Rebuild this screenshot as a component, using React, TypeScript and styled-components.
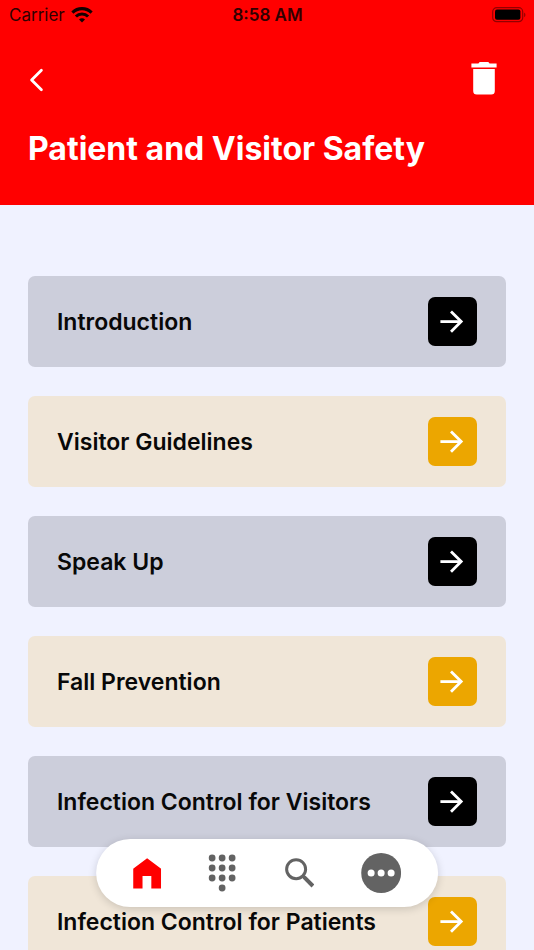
import React from "react";
import styled, { createGlobalStyle } from "styled-components";

const GlobalStyle = createGlobalStyle`
  *, *::before, *::after { box-sizing: border-box; }
  body {
    margin: 0;
    background: #f0f2ff;
    color: #080808;
    font-family: Inter, "Liberation Sans", sans-serif;
  }
  button { font: inherit; border: 0; padding: 0; background: none; cursor: pointer; }
  svg { display: block; }
`;

const Screen = styled.div`
  position: relative;
  display: flex;
  flex-direction: column;
  height: 100vh;
  overflow: hidden;
`;

const Header = styled.header`
  flex: none;
  background: #ff0000;
  padding-bottom: 36px;
`;

const StatusBar = styled.div`
  display: grid;
  grid-template-columns: 1fr auto 1fr;
  align-items: center;
  height: 30px;
  padding: 0 8px 0 9px;
  font-size: 17px;
  line-height: 20px;
  color: #300000;
`;

const Carrier = styled.div`
  display: flex;
  align-items: center;
  gap: 6px;
`;

const Clock = styled.time`
  font-weight: 600;
`;

const BatterySlot = styled.div`
  justify-self: end;
`;

const Toolbar = styled.div`
  display: flex;
  justify-content: space-between;
  align-items: center;
  margin-top: 24px;
  padding: 0 32px 0 24px;
`;

const IconButton = styled.button`
  display: grid;
  place-items: center;
  height: 48px;
`;

const BackButton = styled(IconButton)`
  width: 24px;
`;

const DeleteButton = styled(IconButton)`
  width: 36px;
`;

const Title = styled.h1`
  margin: 27px 28px 0;
  font-size: 32px;
  line-height: 40px;
  font-weight: 700;
  color: #ffffff;
`;

const Content = styled.main`
  flex: 1;
  min-height: 0;
  overflow-y: auto;
  scrollbar-width: none;
  padding: 71px 28px 120px;
`;

const TopicList = styled.ul`
  display: flex;
  flex-direction: column;
  gap: 29px;
  margin: 0;
  padding: 0;
  list-style: none;
`;

type Tone = "dark" | "amber";

const TopicCard = styled.button<{ $tone: Tone }>`
  display: flex;
  align-items: center;
  justify-content: space-between;
  width: 100%;
  height: 91px;
  padding: 0 29px;
  border-radius: 7px;
  background: ${({ $tone }) => ($tone === "dark" ? "#cccedb" : "#f0e6d8")};
  color: #080808;
  text-align: left;
`;

const TopicName = styled.span`
  font-size: 23px;
  line-height: 28px;
  font-weight: 600;
`;

const ArrowTile = styled.span<{ $tone: Tone }>`
  flex: none;
  display: grid;
  place-items: center;
  width: 49px;
  height: 49px;
  border-radius: 7px;
  background: ${({ $tone }) => ($tone === "dark" ? "#000000" : "#eca600")};
`;

const TabBar = styled.nav`
  position: absolute;
  bottom: 43px;
  left: 50%;
  transform: translateX(-50%);
  display: flex;
  align-items: center;
  justify-content: space-between;
  width: 64%;
  height: 68px;
  padding: 0 37px;
  border-radius: 34px;
  background: #ffffff;
  box-shadow: 0 2px 8px rgba(0, 0, 0, 0.16);
`;

const TabButton = styled.button<{ $active?: boolean }>`
  display: grid;
  place-items: center;
  height: 48px;
  color: ${({ $active }) => ($active ? "#ff0000" : "#636363")};
`;

const WifiIcon = () => (
  <svg width="22" height="16" viewBox="0 0 22 16" fill="none" stroke="#140000" strokeWidth="3.1" aria-hidden="true">
    <path d="M1.4 5.6a13.6 13.6 0 0 1 19.2 0" />
    <path d="M4.9 9.5a8.6 8.6 0 0 1 12.2 0" />
    <path d="M11 15.5l-3-3a4.2 4.2 0 0 1 6 0z" fill="#140000" stroke="none" />
  </svg>
);

const BatteryIcon = () => (
  <svg width="34" height="16" viewBox="0 0 34 16" role="img" aria-label="Battery full">
    <rect x="0.7" y="0.7" width="30" height="14" rx="4" fill="none" stroke="#930000" strokeWidth="1.2" />
    <rect x="3" y="2.6" width="25.4" height="10.2" rx="2" fill="#000000" />
    <path d="M32.1 5.4c1.8.8 1.8 4 0 4.8z" fill="#930000" />
  </svg>
);

const BackIcon = () => (
  <svg width="16" height="28" viewBox="0 0 16 28" fill="none" stroke="#ffffff" strokeWidth="2.8" strokeLinecap="round" strokeLinejoin="round" aria-hidden="true">
    <path d="M13.4 6.2 3.6 16l9.8 9.8" />
  </svg>
);

const TrashIcon = () => (
  <svg width="26" height="34" viewBox="0 0 26 34" fill="#ffffff" aria-hidden="true">
    <path d="M.4 2.6h7L8.7 1h8.6l1.3 1.6h7v4H.4z" />
    <path d="M2.2 8h21.6v22a3.6 3.6 0 0 1-3.6 3.6H5.8a3.6 3.6 0 0 1-3.6-3.6z" />
  </svg>
);

const ArrowIcon = () => (
  <svg width="25" height="25" viewBox="0 0 25 25" fill="none" stroke="#ffffff" strokeWidth="2.8" aria-hidden="true">
    <path d="M.4 12.6h21" />
    <path d="m11 2.4 10.2 10.2L11 22.8" />
  </svg>
);

const HomeIcon = () => (
  <svg width="28" height="31" viewBox="0 0 28 31" fill="currentColor" aria-hidden="true">
    <path d="M14 .2 0 10.8v19.6h9.4V18h8.8v12.4H28V10.8z" />
  </svg>
);

const KeypadIcon = () => (
  <svg width="28" height="38" viewBox="0 0 28 38" fill="currentColor" aria-hidden="true">
    {[4, 14, 24].map((y) => [4, 14, 24].map((x) => <circle key={`${x}-${y}`} cx={x} cy={y} r="3.4" />))}
    <circle cx="14" cy="34" r="3.4" />
  </svg>
);

const SearchIcon = () => (
  <svg width="30" height="30" viewBox="0 0 30 30" fill="none" stroke="currentColor" aria-hidden="true">
    <circle cx="12" cy="11.2" r="9.5" strokeWidth="3" />
    <path d="M18.6 17.8l2.2 2.2" strokeWidth="3" />
    <path d="m20 19.2 8.8 8.8" strokeWidth="4" />
  </svg>
);

const MoreIcon = () => (
  <svg width="40" height="40" viewBox="0 0 40 40" aria-hidden="true">
    <circle cx="20" cy="20" r="20" fill="currentColor" />
    {[10, 20, 30].map((x) => (
      <circle key={x} cx={x} cy="20" r="3.5" fill="#ffffff" />
    ))}
  </svg>
);

const topics = [
  "Introduction",
  "Visitor Guidelines",
  "Speak Up",
  "Fall Prevention",
  "Infection Control for Visitors",
  "Infection Control for Patients",
];

export default function App() {
  return (
    <Screen>
      <GlobalStyle />
      <Header>
        <StatusBar>
          <Carrier>
            <span>Carrier</span>
            <WifiIcon />
          </Carrier>
          <Clock>8:58 AM</Clock>
          <BatterySlot>
            <BatteryIcon />
          </BatterySlot>
        </StatusBar>
        <Toolbar>
          <BackButton aria-label="Back">
            <BackIcon />
          </BackButton>
          <DeleteButton aria-label="Delete">
            <TrashIcon />
          </DeleteButton>
        </Toolbar>
        <Title>Patient and Visitor Safety</Title>
      </Header>
      <Content>
        <TopicList>
          {topics.map((topic, index) => {
            const tone: Tone = index % 2 === 0 ? "dark" : "amber";
            return (
              <li key={topic}>
                <TopicCard $tone={tone}>
                  <TopicName>{topic}</TopicName>
                  <ArrowTile $tone={tone}>
                    <ArrowIcon />
                  </ArrowTile>
                </TopicCard>
              </li>
            );
          })}
        </TopicList>
      </Content>
      <TabBar aria-label="Main">
        <TabButton $active aria-label="Home" aria-current="page">
          <HomeIcon />
        </TabButton>
        <TabButton aria-label="Keypad">
          <KeypadIcon />
        </TabButton>
        <TabButton aria-label="Search">
          <SearchIcon />
        </TabButton>
        <TabButton aria-label="More">
          <MoreIcon />
        </TabButton>
      </TabBar>
    </Screen>
  );
}
